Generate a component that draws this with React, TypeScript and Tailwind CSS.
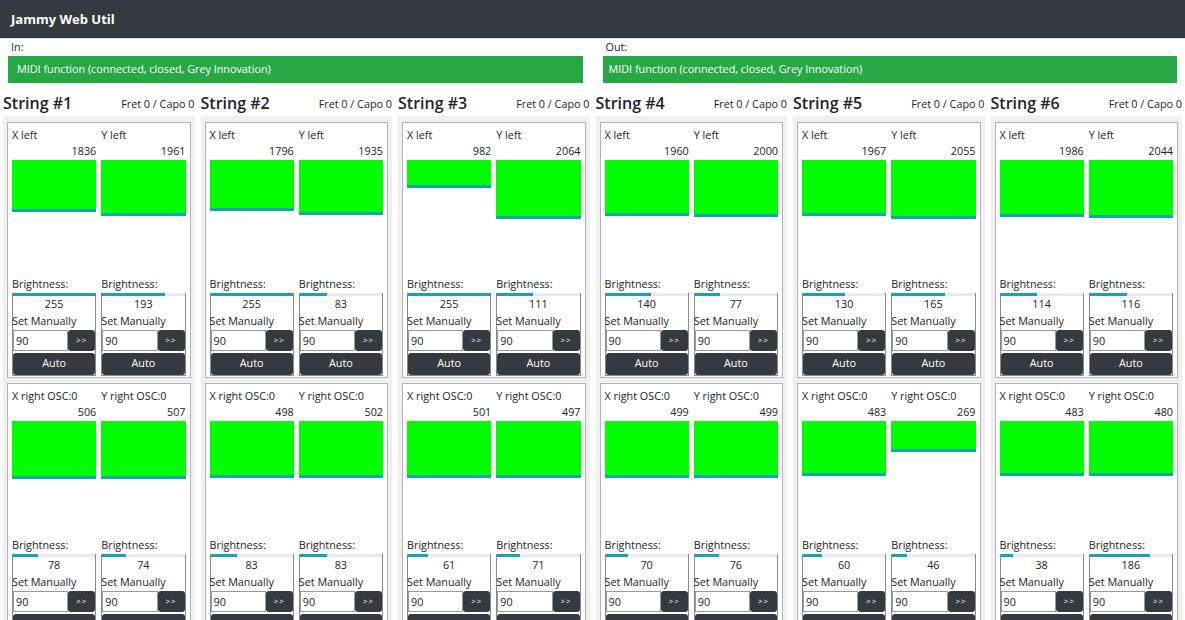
import React from 'react';

type Side = { label: string; x: number; y: number; bx: number; by: number; max: number };
type StringData = { left: Side; right: Side };

const strings: StringData[] = [
  { left: { label: 'left', x: 1836, y: 1961, bx: 255, by: 193, max: 4095 }, right: { label: 'right OSC:0', x: 506, y: 507, bx: 78, by: 74, max: 1023 } },
  { left: { label: 'left', x: 1796, y: 1935, bx: 255, by: 83, max: 4095 }, right: { label: 'right OSC:0', x: 498, y: 502, bx: 83, by: 83, max: 1023 } },
  { left: { label: 'left', x: 982, y: 2064, bx: 255, by: 111, max: 4095 }, right: { label: 'right OSC:0', x: 501, y: 497, bx: 61, by: 71, max: 1023 } },
  { left: { label: 'left', x: 1960, y: 2000, bx: 140, by: 77, max: 4095 }, right: { label: 'right OSC:0', x: 499, y: 499, bx: 70, by: 76, max: 1023 } },
  { left: { label: 'left', x: 1967, y: 2055, bx: 130, by: 165, max: 4095 }, right: { label: 'right OSC:0', x: 483, y: 269, bx: 60, by: 46, max: 1023 } },
  { left: { label: 'left', x: 1986, y: 2044, bx: 114, by: 116, max: 4095 }, right: { label: 'right OSC:0', x: 483, y: 480, bx: 38, by: 186, max: 1023 } },
];

// height of the bar area, px
const AREA = 117;

function Axis({ name, value, max, brightness }: { name: string; value: number; max: number; brightness: number }) {
  return (
    <div className="flex flex-col min-w-0">
      <div>{name}</div>
      <div className="text-right">{value}</div>
      <div className="h-[116px]">
        <div
          className="bg-[#00ff00] border-b-[3px] border-[#17a2b8]"
          style={{ height: Math.round((value / max) * AREA) }}
        />
      </div>
      <div>Brightness:</div>
      <div className="border border-[#8a8a8a] border-t-0">
        <div className="h-[3px] bg-[#e9ecef]">
          <div className="h-full bg-[#17a2b8]" style={{ width: `${(brightness / 255) * 100}%` }} />
        </div>
        <div className="text-center">{brightness}</div>
        <div className="-ml-px">Set Manually</div>
        <div className="flex h-[21px]">
          <div className="flex-1 border border-[#9a9a9a] bg-white pl-[2px] leading-[19px]">90</div>
          <button className="w-[27px] bg-[#343a40] text-white text-[8px] rounded-[3px] tracking-[1px]">&gt;&gt;</button>
        </div>
        <button className="mt-[2px] w-full h-[22px] bg-[#343a40] text-white rounded-[3px]">Auto</button>
      </div>
    </div>
  );
}

function Card({ side }: { side: Side }) {
  return (
    <div className="bg-white border border-[#b4b4b4] px-[4px] pt-[4px] pb-[1px] grid grid-cols-2 gap-[5px]">
      <Axis name={`X ${side.label}`} value={side.x} max={side.max} brightness={side.bx} />
      <Axis name={`Y ${side.label}`} value={side.y} max={side.max} brightness={side.by} />
    </div>
  );
}

export default function App() {
  return (
    <div
      className="min-h-screen bg-white text-[#212529] text-[10.8px] leading-[16.8px]"
      style={{ fontFamily: '"Open Sans", "Noto Sans", sans-serif' }}
    >
      <header className="h-[38px] bg-[#343a40] flex items-center px-[11px] border-b border-[#dcdcdc] box-content">
        <span className="text-white font-bold text-[13px]">Jammy Web Util</span>
      </header>
      <div className="grid grid-cols-2 gap-[20px] px-[8px]">
        <div>
          <div className="pl-[3px]">In:</div>
          <div className="bg-[#28a745] text-white px-[9px] py-[5px]">MIDI function (connected, closed, Grey Innovation)</div>
        </div>
        <div>
          <div className="pl-[3px]">Out:</div>
          <div className="bg-[#28a745] text-white px-[6px] py-[5px]">MIDI function (connected, closed, Grey Innovation)</div>
        </div>
      </div>
      <div className="grid grid-cols-6 mt-[9px]">
        {strings.map((s, i) => (
          <div key={i} className="px-[3px]">
            <div className="flex items-center justify-between h-[22px]">
              <h4 className="text-[16px] leading-[22px] font-semibold">String #{i + 1}</h4>
              <span className="pt-[4px]">Fret 0 / Capo 0</span>
            </div>
            <div className="mt-[2px] bg-[#f0f0f0] px-[4px] pt-[6px] pb-[4px] flex flex-col gap-[5px]">
              <Card side={s.left} />
              <Card side={s.right} />
            </div>
          </div>
        ))}
      </div>
    </div>
  );
}
